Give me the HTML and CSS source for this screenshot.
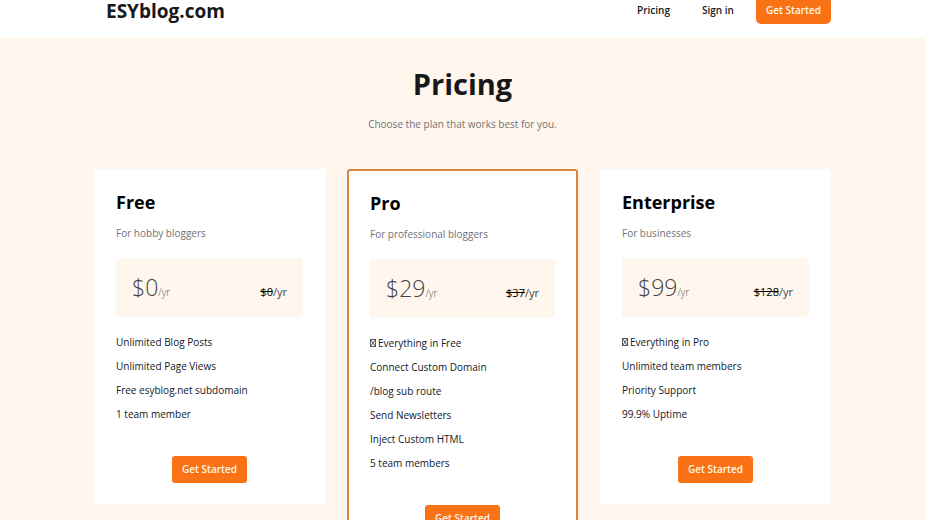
FILE: index.html
```
<!DOCTYPE html>
<html lang="en">
<head>
    <meta charset="UTF-8">
    <meta name="viewport" content="width=device-width, initial-scale=1.0">
    <title>Pricing - ESYblog.com</title>
    <link rel="stylesheet" href="styles.css">
</head>
<body>
    <header class="header">
        <div class="container navbar">
            <a href="#" class="logo">ESYblog.com</a>
            <nav class="nav">
                <a href="#pricing" class="nav-link">Pricing</a>
                <a href="#" class="nav-link">Sign in</a>
                <button type="button" class="btn">Get Started</button>
            </nav>
        </div>
    </header>

    <main class="container" id="pricing">
        <h1>Pricing</h1>
        <p class="subtitle">Choose the plan that works best for you.</p>

        <div class="plans">
            <section class="plan">
                <h2>Free</h2>
                <p class="plan-info">For hobby bloggers</p>
                <div class="price-box">
                    <span class="price">$0<small>/yr</small></span>
                    <span class="old-price"><del>$0</del>/yr</span>
                </div>
                <ul class="features">
                    <li>Unlimited Blog Posts</li>
                    <li>Unlimited Page Views</li>
                    <li>Free esyblog.net subdomain</li>
                    <li>1 team member</li>
                </ul>
                <button type="button" class="btn">Get Started</button>
            </section>

            <section class="plan plan-popular">
                <h2>Pro</h2>
                <p class="plan-info">For professional bloggers</p>
                <div class="price-box">
                    <span class="price">$29<small>/yr</small></span>
                    <span class="old-price"><del>$37</del>/yr</span>
                </div>
                <ul class="features">
                    <li><svg class="mark" viewBox="0 0 6 8" aria-hidden="true"><path d="M.5.5h5v7h-5zl5 7M5.5.5l-5 7"/></svg>Everything in Free</li>
                    <li>Connect Custom Domain</li>
                    <li>/blog sub route</li>
                    <li>Send Newsletters</li>
                    <li>Inject Custom HTML</li>
                    <li>5 team members</li>
                </ul>
                <button type="button" class="btn">Get Started</button>
            </section>

            <section class="plan">
                <h2>Enterprise</h2>
                <p class="plan-info">For businesses</p>
                <div class="price-box">
                    <span class="price">$99<small>/yr</small></span>
                    <span class="old-price"><del>$128</del>/yr</span>
                </div>
                <ul class="features">
                    <li><svg class="mark" viewBox="0 0 6 8" aria-hidden="true"><path d="M.5.5h5v7h-5zl5 7M5.5.5l-5 7"/></svg>Everything in Pro</li>
                    <li>Unlimited team members</li>
                    <li>Priority Support</li>
                    <li>99.9% Uptime</li>
                </ul>
                <button type="button" class="btn">Get Started</button>
            </section>
        </div>
    </main>
</body>
</html>
```
FILE: styles.css
```
* {
    box-sizing: border-box;
}

body {
    margin: 0;
    background-color: #fff7ed;
    color: #111827;
    font-family: "Open Sans", "Noto Sans", sans-serif;
    font-size: 10px;
    line-height: 16px;
    overflow-x: hidden;
}

h1, h2, p, ul {
    margin: 0;
    padding: 0;
}

.container {
    max-width: 737px;
    margin: 0 auto;
}

/* The top bar sits partly above the window edge */
.header {
    margin-top: -18px;
    background-color: white;
}

.navbar {
    display: flex;
    align-items: center;
    justify-content: space-between;
    height: 56px;
    padding-left: 12px;
}

.logo {
    padding-top: 2px;
    color: #18181b;
    font-size: 19px;
    font-weight: 700;
    line-height: 28px;
    text-decoration: none;
}

.nav {
    display: flex;
    align-items: center;
}

.nav-link {
    margin-right: 32px;
    color: #18181b;
    font-weight: 600;
    text-decoration: none;
}

.nav-link + .nav-link {
    margin-right: 22px;
}

.btn {
    height: 27px;
    padding: 0 10px 1px;
    border: none;
    border-radius: 3px;
    background-color: #f97316;
    color: #fff7ed;
    font-family: inherit;
    font-size: 10px;
    font-weight: 600;
    cursor: pointer;
}

.header .btn {
    border-radius: 5px;
}

.btn:hover {
    background-color: #ea670c;
}

h1 {
    padding-top: 24px;
    color: #18181b;
    font-size: 29px;
    line-height: 44px;
    text-align: center;
}

.subtitle {
    margin-top: 10px;
    color: #71717a;
    text-align: center;
}

.plans {
    display: grid;
    grid-template-columns: repeat(3, 1fr);
    align-items: start;
    gap: 22px;
    padding: 37px 0 32px;
}

.plan {
    display: flex;
    flex-direction: column;
    padding: 19px 22px 21px;
    background-color: white;
}

.plan-popular {
    padding: 18px 21px 21px;
    border: 2px solid #d9863c;
    border-radius: 3px;
}

h2 {
    color: black;
    font-size: 18px;
    line-height: 28px;
}

.plan-info {
    margin-top: 9px;
    color: #71717a;
}

.price-box {
    display: flex;
    align-items: baseline;
    justify-content: space-between;
    margin-top: 17px;
    padding: 12px 16px 13px;
    border-radius: 3px;
    background-color: #fff7ed;
}

.price {
    color: #3f3f46;
    font-size: 23px;
    font-weight: 300;
    line-height: 34px;
}

.price small {
    color: #52525b;
    font-size: 10px;
    line-height: 16px;
}

.old-price {
    color: #3f3f46;
    font-size: 11px;
    font-weight: 400;
}

.old-price del {
    color: black;
}

.features {
    margin-top: 13px;
    list-style: none;
    line-height: 24px;
}

.mark {
    width: 6px;
    height: 8px;
    margin-right: 2px;
    fill: none;
    stroke: #111827;
    stroke-width: .7;
}

.plan .btn {
    align-self: center;
    margin-top: 30px;
}
```
